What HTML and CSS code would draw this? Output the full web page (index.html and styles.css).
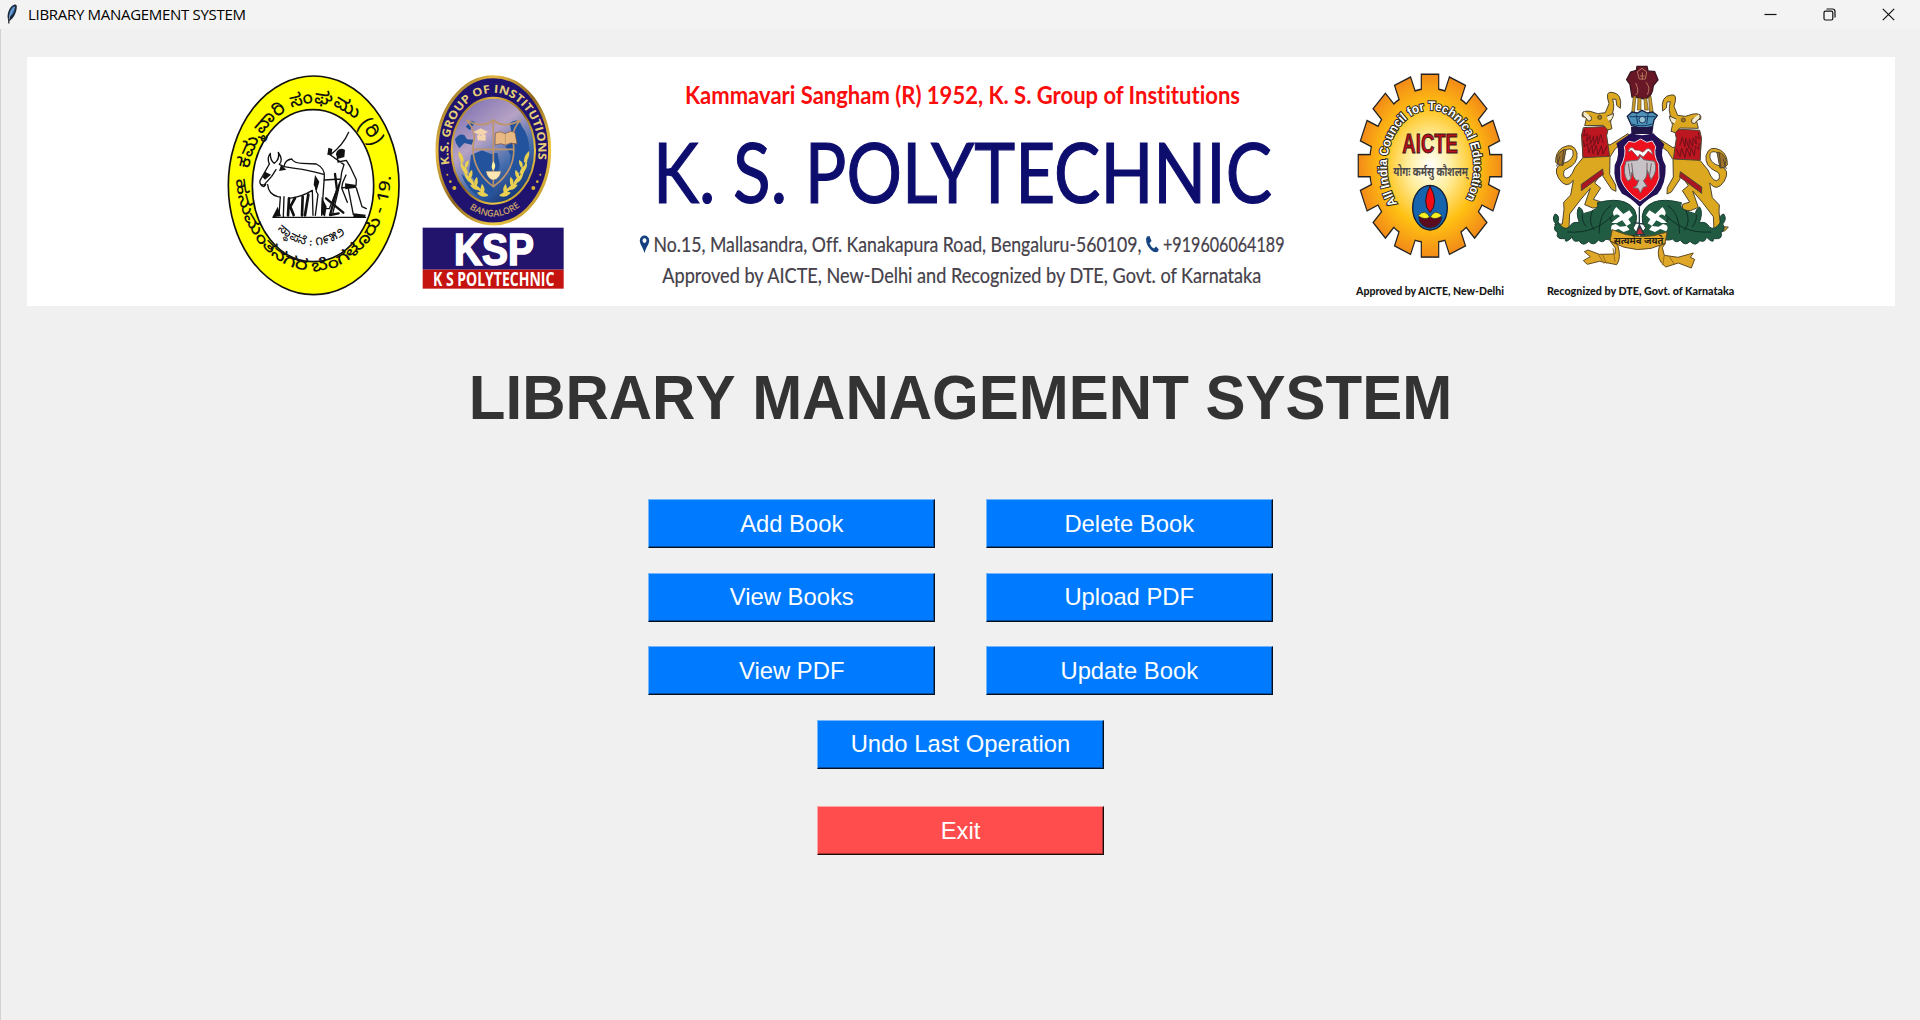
FILE: index.html
```html
<!DOCTYPE html>
<html lang="en">
<head>
<meta charset="utf-8">
<title>LIBRARY MANAGEMENT SYSTEM</title>
<link rel="stylesheet" href="styles.css">
</head>
<body>
<header class="titlebar">
  <svg class="feather" viewBox="0 0 12 20"><path d="M2.5 17C0 11 3 3 8 .8 10 0 11 1 10.800 3 10.600 9 7 15 3.500 17Z" fill="#19283b"/><path d="M3.200 13C3 8 5 4 8.500 2 9.500 6 7 11 3.200 13Z" fill="#4682c8"/><path d="M3 19C3 12 5 7 9 3" fill="none" stroke="#9eb7ce" stroke-width=".8"/><path d="M2.800 15V19.500" stroke="#222" stroke-width="1.200"/></svg>
  <span class="caption">LIBRARY MANAGEMENT SYSTEM</span>
  <div class="controls">
    <svg viewBox="0 0 13 13"><path d="M.5 6.500H12.500" stroke="#111" stroke-width="1.200"/></svg>
    <svg viewBox="0 0 13 13" fill="none" stroke="#111" stroke-width="1.200"><rect x="1" y="3.200" width="8.800" height="8.800" rx="1.500"/><path d="M3.500 1H9.500Q12 1 12 3.500V9.500"/></svg>
    <svg viewBox="0 0 13 13"><path d="M.8 .8 12.200 12.200M12.200 .8 .8 12.200" stroke="#111" stroke-width="1.200"/></svg>
  </div>
</header>
<main class="window">
  <section class="banner">
    <svg class="seal" viewBox="0 0 600 735">
      <defs>
        <path id="sealTop" d="M102 326A202 250 0 0 1 492 306"/>
        <path id="sealBottom" d="M63 358A233 301 0 0 0 528 340L524 290"/>
        <path id="sealYear" d="M188 507Q290 606 410 508"/>
      </defs>
      <ellipse cx="296" cy="376" rx="256" ry="328" fill="#ff0" stroke="#111" stroke-width="5"/>
      <ellipse cx="294" cy="377" rx="182" ry="228" fill="#fff" stroke="#111" stroke-width="5"/>
      <g class="kannada">
        <text class="sangham" textLength="530" lengthAdjust="spacingAndGlyphs"><textPath href="#sealTop">ಕಮ್ಮವಾರಿ ಸಂಘಮು (ರಿ)</textPath></text>
        <text class="place" textLength="800" lengthAdjust="spacingAndGlyphs"><textPath href="#sealBottom">ಹನುಮಂತನಗರ ಬೆಂಗಳೂರು - 19.</textPath></text>
        <text class="year" textLength="225"><textPath href="#sealYear">ಸ್ಥಾಪನೆ : ೧೯೫೨</textPath></text>
      </g>
      <g fill="none" stroke="#111" stroke-width="4" stroke-linecap="round" stroke-linejoin="round">
        <path d="M163 312Q155 292 166 280Q165 302 178 310Q195 297 190 277Q206 300 193 313L207 320Q235 325 262 328Q300 335 326 343"/>
        <path d="M163 312 135 362Q132 377 148 374L170 349 183 329M137 373Q145 386 152 374M158 374Q160 402 188 410L196 411 192 466M207 410 205 470M222 415Q260 411 292 391L294 466M207 320Q210 299 230 297Q238 310 262 310L304 312Q330 325 328 350L326 379M304 360Q298 390 309 403L301 466M326 379 320 466"/>
        <path d="M222 415 219 466M240 414 226 440 236 465M263 410 261 466M280 404 270 466" stroke-width="8"/>
        <path d="M174 472H452M328 360 378 357M342 282 387 314 380 337 377 360 343 446 326 446M377 360 353 462M366 282 369 306 394 301 407 323 424 359 423 377 380 384 383 368 393 345M424 384 441 440 454 446M400 386 415 464M380 384 397 427M346 285Q384 256 401 217"/>
        <path d="M360 342 366 390 345 465 371 460M333 415 385 458" stroke-width="7"/>
      </g>
      <path d="m150 335 18 9-18 15-7-7zM198 315l16 14-22 4zM365 275q10-15 25-5l-2 21-18 5-7-13zM340 263l12 4-2 16-13 2zM390 370l30 4 5 9-34 5zM300 345l13 20-8 27-9-18zM188 440l10 29-26 3zM320 410l15 30-5 30-12-10zM416 460l36 4-2 10-35-1z" fill="#111"/>
    </svg>
    <svg class="crest" viewBox="15 0 510 735">
      <defs>
        <linearGradient id="gold" x2="1" y2="1"><stop stop-color="#6b4d16"/><stop offset=".25" stop-color="#e4b741"/><stop offset=".5" stop-color="#8d641c"/><stop offset=".75" stop-color="#efca46"/><stop offset="1" stop-color="#9c6c12"/></linearGradient>
        <linearGradient id="sky" x2=".6" y2="1"><stop stop-color="#7165ae"/><stop offset=".45" stop-color="#b6a2c4"/><stop offset=".75" stop-color="#416bac"/><stop offset="1" stop-color="#173c7d"/></linearGradient>
        <path id="crestTop" d="M119 313A135 173 0 1 1 381 313"/>
        <path id="crestBottom" d="M178 445A150 197 0 0 0 332 438"/>
      </defs>
      <ellipse cx="250" cy="271" rx="169" ry="221" fill="#201370" stroke="url(#gold)" stroke-width="9"/>
      <ellipse cx="250" cy="272" rx="125" ry="159" fill="url(#sky)" stroke="url(#gold)" stroke-width="6"/>
      <path d="M135 238q12-20 28-13l8 13 20 1-6 15-22-5-15 16-10-15zM167 200l16-18 12 4-15 25zM299 190q26-20 36 8 26 33 22 83l-24 60-16 22-18-25 3-53-16-26 24-15zM183 285l33-14 27 11 19-4 8 38-13 46-12 55-34-10-14-45-20-20zM154 341l45 41 43 41q-65-13-88-82z" fill="#24539e"/>
      <path d="M250 180Q218 208 169 180 201 214 190 250 182 327 250 380 321 328 310 250 302 211 332 180 283 208 250 180ZM250 180V380M189 268H311" fill="none" stroke="#bd946c" stroke-width="5"/>
      <path d="M190 216 212 205 234 216 212 227zM201 226l2 15 24 1v-19z" fill="#f5d5ae"/>
      <path d="M256 219q15-8 30 2 16-11 29-3l6 34q-20-7-34 3-14-8-32 0z" fill="#e9b983" stroke="#7c5446" stroke-width="2"/>
      <path d="M286 221V254M228 334H273Q268 358 250 360 233 358 228 334Z" stroke="#85634d" fill="#ffe7b3"/>
      <path d="M250 303Q262 321 250 331 240 323 250 303Z" fill="#fff0a0"/>
      <g id="laurel" fill="#ead051"><path d="M146 273q17 15 15 35-19-12-15-35zM176 300q1 18-9 25-7-18 9-25zM151 313q20 6 24 29-20-4-24-29zM186 329q6 17-7 28-10-14 7-28zM164 344q22 4 29 27-24-2-29-27zM201 350q6 16-2 30-14-14 2-30zM180 374q20-3 34 15-23 6-34-15zM216 371q13 16 4 29-14-8-4-29zM201 398q18-9 33 9-20 9-33-9zM154 295Q166 365 235 405l-2 4Q158 370 150 295z"/></g>
      <use href="#laurel" transform="translate(503) scale(-1 1)"/>
      <text class="crest-name" textLength="555" lengthAdjust="spacingAndGlyphs"><textPath href="#crestTop">K.S. GROUP OF INSTITUTIONS</textPath></text>
      <text class="crest-city" textLength="165" lengthAdjust="spacingAndGlyphs"><textPath href="#crestBottom">BANGALORE</textPath></text>
      <g fill="#d8b335"><circle cx="133" cy="384" r="6"/><circle cx="121" cy="365" r="4"/><circle cx="112" cy="344" r="3"/><circle cx="370" cy="384" r="6"/><circle cx="382" cy="365" r="4"/><circle cx="391" cy="344" r="3"/></g>
      <rect x="38" y="503" width="423" height="126" fill="#22136d"/>
      <rect x="38" y="629" width="423" height="57" fill="#c5130f"/>
      <text class="ksp" x="132" y="615" textLength="240" lengthAdjust="spacingAndGlyphs">KSP</text>
      <text class="ksp-sub" x="69" y="679" textLength="364" lengthAdjust="spacingAndGlyphs">K S POLYTECHNIC</text>
    </svg>
    <svg class="college" viewBox="0 0 680 245">
      <text class="society" x="65" y="43.800" textLength="555" lengthAdjust="spacingAndGlyphs">Kammavari Sangham (R) 1952, K. S. Group of Institutions</text>
      <text class="name" x="33" y="142.500" textLength="619" lengthAdjust="spacingAndGlyphs">K. S. POLYTECHNIC</text>
      <path d="M24.500 193.300C23 187 19.800 184.500 19.800 180.500A4.700 5 0 0 1 29.200 180.500C29.200 184.500 26 187 24.500 193.300ZM24.500 178.200A2 2.400 0 1 0 24.500 183A2 2.400 0 1 0 24.500 178.200Z" fill="#15427f" fill-rule="evenodd"/>
      <text class="line" x="33.500" y="192.300" textLength="488" lengthAdjust="spacingAndGlyphs">No.15, Mallasandra, Off. Kanakapura Road, Bengaluru-560109,</text>
      <path d="M527 176.500 529.500 176 531.500 181 529.500 183.200Q531 187 534 188.600L536 186.500 538.700 189.200 538 191.500Q535 193.500 531 190Q526 185 526 179Z" fill="#174581"/>
      <text class="line" x="543" y="192.300" textLength="121.500" lengthAdjust="spacingAndGlyphs">+919606064189</text>
      <text class="line" x="42.300" y="222.500" textLength="599" lengthAdjust="spacingAndGlyphs">Approved by AICTE, New-Delhi and Recognized by DTE, Govt. of Karnataka</text>
    </svg>
    <svg class="aicte" viewBox="0 15 540 735">
      <defs>
        <radialGradient id="sun" gradientUnits="userSpaceOnUse" cx="0" cy="0" r="275"><stop stop-color="#fff"/><stop offset=".3" stop-color="#ffee9f"/><stop offset=".66" stop-color="#ffc012"/><stop offset="1" stop-color="#f28a18"/></radialGradient>
        <path id="aicteArc" d="M172 446A130 170 0 1 1 372 442"/>
        <g id="teethPair"><rect x="-31" y="-272" width="62" height="544"/></g>
        <g id="gear"><use href="#teethPair"/><use href="#teethPair" transform="rotate(22.500)"/><use href="#teethPair" transform="rotate(45)"/><use href="#teethPair" transform="rotate(67.500)"/><use href="#teethPair" transform="rotate(90)"/><use href="#teethPair" transform="rotate(112.500)"/><use href="#teethPair" transform="rotate(135)"/><use href="#teethPair" transform="rotate(157.500)"/><circle r="229"/></g>
      </defs>
      <g transform="translate(270 332) scale(.785 1)"><use href="#gear" fill="#222" stroke="#222" stroke-width="9"/><use href="#gear" fill="url(#sun)"/></g>
      <text class="aicte-ring" textLength="690" lengthAdjust="spacingAndGlyphs"><textPath href="#aicteArc">All India Council for Technical Education</textPath></text>
      <text class="aicte-name" x="187" y="293" textLength="167" lengthAdjust="spacingAndGlyphs">AICTE</text>
      <text class="motto" x="160" y="363" textLength="224" lengthAdjust="spacingAndGlyphs">योगः कर्मसु कौशलम्</text>
      <ellipse cx="270" cy="458" rx="52" ry="67" fill="#1664ad" stroke="#111c34" stroke-width="4"/>
      <path d="M270 393Q298 443 270 473 244 443 270 393Z" fill="#f20d16" stroke="#341016" stroke-width="3"/>
      <path d="M236 487H306Q301 516 270 519 239 516 236 487Z" fill="#5a0b20" stroke="#222" stroke-width="2"/>
      <path d="M234 482Q255 460 269 486 255 497 234 482ZM306 482Q285 460 271 486 286 497 306 482Z" fill="#f8ef22" stroke="#222" stroke-width="2"/>
      <text class="note" x="48" y="721" textLength="444" lengthAdjust="spacingAndGlyphs">Approved by AICTE, New-Delhi</text>
    </svg>
    <svg class="karnataka" viewBox="0 15 660 735">
      <g id="beast" stroke="#4f4531" stroke-width="3" stroke-linejoin="round">
        <path d="M155 239 159 308 135 337Q118 381 102 365 97 345 111 341 145 326 141 294 131 260 97 278 76 291 77 322 92 337 101 315L105 286Q121 277 129 288 135 315 98 326 67 336 86 370 109 405 130 376L122 420 101 442 102 463 97 507 74 508 85 520 125 524 117 517 119 477 151 435 181 400 164 449 188 459 213 457 211 440 190 433 212 399 194 384 217 350 219 364 245 403 258 409 257 390 239 358 240 306 256 281 300 247 294 236 240 270Z" fill="#dca81f"/>
        <path d="M160 218 236 214 230 242 239 304 159 308 155 239Z" fill="#bc1621"/>
        <path d="M164 212 170 187 157 185Q152 165 180 169L203 176 226 173 237 146Q224 107 246 112Q278 115 271 160L260 151 258 133 248 132Q256 160 244 182L242 204 246 221 233 225 220 211Z" fill="#dca81f"/>
        <path d="M161 169Q153 181 169 190 173 202 183 196 187 184 178 181M230 184 251 175Q249 195 236 199" fill="#f4e9ca"/>
        <circle cx="209" cy="187" r="6" fill="#a97817"/>
        <path d="M164 224l-3 20 11-8-2 24 10-19 1 27 10-25 1 29 10-30 2 25 8-28 8 25M161 256l2 20 10-11 3 29 10-24 3 26 10-25 5 29 10-28 5 25 12-24" fill="none" stroke="#6e101a"/>
        <path d="M154 388 218 342 220 358 154 407Z" fill="#a91623"/>
        <path d="M80 306Q94 281 108 284L99 331 85 329ZM90 303 80 334M101 286 96 332" fill="#9f7428"/>
      </g>
      <use href="#beast" transform="translate(669 8) scale(-1 1)"/>
      <g id="foliage">
        <path d="M325 541Q302 560 263 548 245 560 228 552 218 567 205 555 191 576 176 559 159 577 147 557 129 564 127 546 103 569 106 551 75 554 83 533 67 524 78 507 64 493 75 477 90 480 84 501Q102 529 118 516 127 498 148 503 136 472 147 456 159 462 160 476 213 464 202 443 255 430 284 441 327 458 318 504L309 519 325 541Z" fill="#205b42" stroke="#183f33" stroke-width="3"/>
        <path d="M112 531Q205 538 262 465M157 478Q155 500 169 515M188 466Q173 500 193 526M243 451Q207 475 207 536M240 487Q252 534 300 523" fill="none" stroke="#102f27" stroke-width="3"/>
        <path d="M259 456Q244 470 252 483 263 474 270 484 255 494 244 504L261 504 277 496 290 513 303 505 295 493 308 481 298 466 280 477ZM247 510Q239 519 248 529L265 522 281 531 299 524 290 513 270 515 257 507Z" fill="#fff"/>
      </g>
      <use href="#foliage" transform="translate(656) scale(-1 1)"/>
      <path d="M303 235Q336 246 370 235L403 268Q387 300 407 332 409 385 382 418Q356 428 329 456Q302 427 276 416 248 380 254 331 272 298 259 265Z" fill="#231055"/>
      <path d="M296 259 314 262 332 252 350 262 367 258 377 275Q369 298 386 328L387 369Q378 407 330 438Q286 410 273 374L272 335Q290 299 283 275Z" fill="#ed101f" stroke="#e7e2e9" stroke-width="3"/>
      <path d="M315 285Q301 268 294 291L305 286 324 307 329 298 340 306 355 288 368 299Q363 276 349 282L339 292 327 286Z" fill="#fff" stroke="#5f4b51" stroke-width="2"/>
      <path d="M324 315 288 319Q276 354 293 378L302 373 306 351Q315 384 327 375L319 393 309 398 324 400 331 414 340 397 351 394 340 377Q351 369 352 346L363 374Q384 349 374 319L341 314 332 304Z" fill="#c6c2c6" stroke="#72646b" stroke-width="3"/>
      <path d="M295 326 301 365M305 324 309 360M364 325 359 361M351 323 351 356" stroke="#72646b" stroke-width="3"/>
      <path d="M290 74 302 51 319 46 321 34H351L354 48 374 50 384 75 370 92Q367 128 344 132 323 126 306 126L300 88Z" fill="#681727" stroke="#391620" stroke-width="4"/>
      <path d="M322 50 336 40 350 51 346 72H328ZM330 63H344M337 52V75M317 84Q330 112 317 120M348 82Q363 99 352 119" fill="none" stroke="#b5785b" stroke-width="3"/>
      <path d="M310 124 318 124 313 173H305ZM324 129 333 129 333 165H322ZM342 130 350 130 355 165H344ZM356 126 363 124 370 175H359Z" fill="#c99b25" stroke="#574524" stroke-width="2"/>
      <path d="M292 184 306 171 322 174 336 166 352 174 368 171 382 181 372 195 368 214 340 222 305 212Z" fill="#4d91b6" stroke="#192348" stroke-width="4"/>
      <path d="M299 185H375M305 207Q336 218 367 207M319 179 323 207M354 178 350 207" fill="none" stroke="#143967" stroke-width="3"/><circle cx="337" cy="194" r="10" fill="#9bc2d3" stroke="#143967" stroke-width="3"/>
      <path d="M303 216 370 216 367 237 304 237Z" fill="#211545"/>
      <path d="M328 456V521M312 503 341 507M328 510 317 539H343Z" fill="#b82933" stroke="#223b42" stroke-width="4"/>
      <path d="M247 524Q329 562 411 531L405 565Q322 606 240 558ZM240 558 256 579 255 597 208 598 174 585 163 590 181 605 160 617 172 628 208 619 260 629Q275 609 263 569ZM407 564 397 578 403 601 444 607 490 594 481 607 494 613 484 639 445 624 407 636Q376 613 388 574Z" fill="#dfa829" stroke="#624b21" stroke-width="3"/>
      <path d="M205 598 222 626M216 597 230 626M403 600 398 630M417 603 433 628M249 580 255 620" stroke="#9c6d1c" stroke-width="3"/>
      <text class="ribbon-motto" x="251" y="568" textLength="149" lengthAdjust="spacingAndGlyphs">सत्यमेव जयते</text>
      <text class="note" x="51" y="721" textLength="562" lengthAdjust="spacingAndGlyphs">Recognized by DTE, Govt. of Karnataka</text>
    </svg>
  </section>
  <h1 class="heading">LIBRARY MANAGEMENT SYSTEM</h1>
  <div class="actions">
    <button class="btn">Add Book</button>
    <button class="btn">Delete Book</button>
    <button class="btn">View Books</button>
    <button class="btn">Upload PDF</button>
    <button class="btn">View PDF</button>
    <button class="btn">Update Book</button>
    <button class="btn wide">Undo Last Operation</button>
    <button class="btn wide exit">Exit</button>
  </div>
</main>
</body>
</html>
```
FILE: styles.css
```css
* { box-sizing: border-box; }
body {
  margin: 0;
  height: 1020px;
  overflow: hidden;
  display: flex;
  flex-direction: column;
  background: #f0f0f0;
  font-family: "Liberation Sans", Arial, sans-serif;
}
.titlebar {
  height: 29px;
  flex: none;
  display: flex;
  align-items: center;
  padding: 0 25px 1px 6px;
  background: #f3f3f3;
}
.feather { width: 12px; height: 20px; margin-right: 10px; }
.caption {
  font: 15px/28px "Open Sans", "Noto Sans", sans-serif;
  letter-spacing: -0.3px;
  color: #000;
}
.controls { display: flex; gap: 46px; margin-left: auto; }
.controls svg { width: 13px; height: 13px; }
.window {
  flex: 1;
  display: flex;
  flex-direction: column;
  align-items: center;
  border-left: 1px solid #d2d2d2;
  padding-top: 27.5px;
}
.banner {
  width: 1868px;
  height: 249.5px;
  flex: none;
  align-self: flex-start;
  margin-left: 26px;
  padding: 3.5px 0 0 188px;
  display: flex;
  background: #fff;
}
.banner svg { height: 245px; flex: none; overflow: visible; }
.seal { width: 200px; }
.crest { width: 170px; margin-right: 35px; }
.college { width: 680px; margin-right: 40px; }
.aicte { width: 180px; margin-right: 10px; }
.karnataka { width: 220px; }

.kannada { font: 500 50px "Noto Sans Kannada", "Noto Sans", sans-serif; fill: #111; }
.sangham { font-size: 54px; }
.place { font-size: 48px; }
.year { font-size: 34px; }
.crest-name { font: 700 34px "Open Sans", sans-serif; fill: #e6cf75; }
.crest-city { font: 600 27px "Open Sans", sans-serif; fill: #cba568; }
.ksp { font: 700 132px "Liberation Sans", sans-serif; fill: #fff; stroke: #fff; stroke-width: 5px; }
.ksp-sub { font: 700 56px "Open Sans", sans-serif; fill: #fff; }
.society { font: 700 25px Lato, sans-serif; fill: #fb0d0d; }
.name { font: 400 84px Lato, sans-serif; fill: #0d0d6e; stroke: #0d0d6e; stroke-width: 1.2px; }
.line { font: 400 21px Lato, sans-serif; fill: #45404a; stroke: #45404a; stroke-width: .2px; }
.college text { font-variant-ligatures: none; }
.aicte-ring { font: 700 38px "Liberation Sans", sans-serif; fill: #fff; stroke: #222; stroke-width: 6px; paint-order: stroke; }
.aicte-name { font: 700 82px "Liberation Sans", sans-serif; fill: #bb1018; stroke: #37191c; stroke-width: 3px; }
.motto { font: 700 38px "Noto Sans Devanagari", "Noto Sans", sans-serif; fill: #4b4a4a; }
.ribbon-motto { font: 700 28px "Noto Sans Devanagari", "Noto Sans", sans-serif; fill: #272014; }
.note { font: 900 34px Lato, sans-serif; fill: #171717; }

.heading {
  margin: 55.5px 0 0 0;
  font-size: 60px;
  line-height: 72px;
  font-weight: 700;
  font-kerning: none;
  color: #333;
  white-space: nowrap;
  transform: scaleY(1.05);
}
.actions {
  display: grid;
  grid-template-columns: 287px 287px;
  grid-auto-rows: 49px;
  gap: 24.67px 50.5px;
  margin: 65.5px 0 0 0;
}
.btn {
  width: 287px;
  height: 49px;
  padding: 0;
  border: 1px solid;
  border-color: #75b5fb #04101f #04101f #75b5fb;
  box-shadow: inset -1px -1px #064d9e;
  background: #007bff;
  color: #fff;
  font: 23.8px "Liberation Sans", Arial, sans-serif;
}
.wide { grid-column: 1 / -1; justify-self: center; }
.exit {
  margin-top: 12.5px;
  background: #ff4d4d;
  border-color: #f9a5a5 #1d0909 #1d0909 #f9a5a5;
  box-shadow: inset -1px -1px #a43434;
}
```
